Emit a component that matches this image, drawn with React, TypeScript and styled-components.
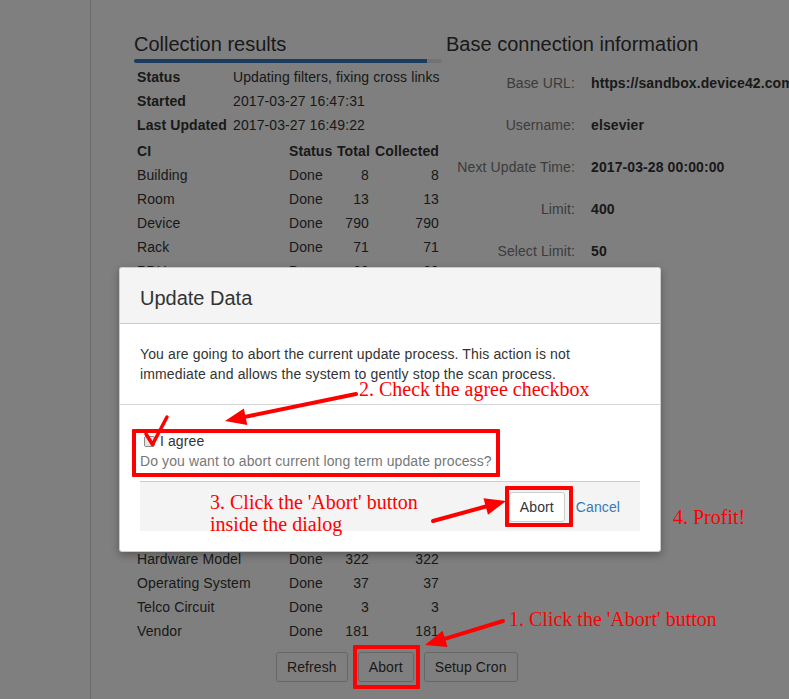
import React from "react";
import styled, { createGlobalStyle } from "styled-components";

const GlobalStyle = createGlobalStyle`
  html, body { margin: 0; padding: 0; overflow: hidden; background: #fff; }
  body {
    font-family: "Liberation Sans", Arial, sans-serif;
    font-size: 14px;
    line-height: 20px;
    color: #333;
    letter-spacing: 0.1px;
  }
  * { box-sizing: border-box; }
`;

const Page = styled.div`
  position: relative;
  width: 100vw;
  height: 100vh;
  overflow: hidden;
  display: flex;
  background: #fff;
`;

const Sidebar = styled.aside`
  flex: none;
  width: 91px;
  border-right: 1px solid #d6d6d6;
`;

const Main = styled.main`
  flex: 1;
  min-width: 0;
  display: flex;
  gap: 4px;
  padding: 33px 0 0 43px;
`;

const LeftCol = styled.section`
  flex: none;
  width: 308px;
`;

const RightCol = styled.section`
  flex: none;
  white-space: nowrap;
`;

const Heading = styled.h2<{ $gap: number }>`
  margin: 0 0 ${(p) => p.$gap}px;
  font-size: 20px;
  line-height: 22px;
  font-weight: 400;
  letter-spacing: 0;
  white-space: nowrap;
`;

const Progress = styled.div`
  height: 4px;
  border-radius: 2px;
  background: #e6e6e6;
  overflow: hidden;
  margin-bottom: 2px;
`;

const ProgressFill = styled.div`
  height: 100%;
  background: #3479bd;
`;

const InfoGrid = styled.div`
  display: grid;
  grid-template-columns: 96px 1fr;
  margin-bottom: 2px;
`;

const CIGrid = styled.div`
  display: grid;
  grid-template-columns: 152px 48px 38px 70px;
`;

const Cell = styled.div<{ $bold?: boolean; $right?: boolean }>`
  padding: 2px 3px;
  white-space: nowrap;
  font-weight: ${(p) => (p.$bold ? 700 : 400)};
  text-align: ${(p) => (p.$right ? "right" : "left")};
`;

const ButtonBar = styled.div`
  display: flex;
  gap: 10px;
  margin-top: 9px;
  padding-left: 142px;
  white-space: nowrap;
`;

const Button = styled.button`
  flex: none;
  height: 30px;
  padding: 0 10px;
  border: 1px solid #ccc;
  border-radius: 3px;
  background: #fff;
  color: #333;
  font-family: inherit;
  font-size: 14px;
  letter-spacing: 0.1px;
  line-height: 20px;
  white-space: nowrap;
`;

const FieldGrid = styled.div`
  display: grid;
  grid-template-columns: 129px auto;
  column-gap: 16px;
  grid-auto-rows: 42px;
  align-items: center;
`;

const FieldLabel = styled.div`
  text-align: right;
  color: #777;
`;

const FieldValue = styled.div`
  font-weight: 700;
`;

const Backdrop = styled.div`
  position: absolute;
  inset: 0;
  background: rgba(0, 0, 0, 0.5);
`;

const Dialog = styled.div`
  position: absolute;
  left: 119px;
  top: 267px;
  width: 542px;
  background: #fff;
  border: 1px solid rgba(0, 0, 0, 0.2);
  border-radius: 3px;
  box-shadow: 0 3px 9px rgba(0, 0, 0, 0.3);
  padding-bottom: 20px;
`;

const DialogHeader = styled.div`
  background: #f4f4f4;
  padding: 19px 20px 14px;
  border-bottom: 1px solid #ccc;
  border-radius: 3px 3px 0 0;
`;

const DialogTitle = styled.h4`
  margin: 0;
  font-size: 20px;
  line-height: 22px;
  font-weight: 400;
  letter-spacing: 0;
`;

const DialogBody = styled.div`
  padding: 20px 20px 20px;
  border-bottom: 1px solid #d6d6d6;
  letter-spacing: 0.14px;
  p { margin: 0; }
`;

const ConfirmBlock = styled.div`
  padding: 26px 20px 0;
`;

const CheckLabel = styled.label`
  display: flex;
  align-items: center;
  height: 20px;
`;

const Checkbox = styled.input`
  appearance: none;
  width: 11px;
  height: 11px;
  margin: 0 5px 0 4px;
  border: 1px solid #8c8c8c;
  border-radius: 2px;
  background: #e4e4e4;
`;

const Hint = styled.div`
  color: #777;
`;

const DialogFooter = styled.div`
  margin: 10px 20px 0;
  padding: 10px 20px 9px;
  background: #f4f4f4;
  border-top: 1px solid #ccc;
  display: flex;
  justify-content: flex-end;
  align-items: center;
  gap: 11px;
`;

const LinkButton = styled.a`
  color: #337ab7;
  text-decoration: none;
`;

const Annotations = styled.div`
  position: absolute;
  inset: 0;
  pointer-events: none;
`;

const Note = styled.div<{ $x: number; $y: number }>`
  position: absolute;
  left: ${(p) => p.$x}px;
  top: ${(p) => p.$y}px;
  font-family: "Liberation Serif", "Times New Roman", serif;
  font-size: 20px;
  line-height: 22px;
  letter-spacing: 0;
  color: #ff0000;
  white-space: nowrap;
`;

const Frame = styled.div<{ $x: number; $y: number; $w: number; $h: number }>`
  position: absolute;
  left: ${(p) => p.$x}px;
  top: ${(p) => p.$y}px;
  width: ${(p) => p.$w}px;
  height: ${(p) => p.$h}px;
  border: 4px solid #ff0000;
  border-radius: 1px;
`;

const Drawing = styled.svg`
  position: absolute;
  inset: 0;
  width: 100%;
  height: 100%;
`;

type Pt = [number, number];

function Arrow({ from, to }: { from: Pt; to: Pt }) {
  const dx = to[0] - from[0];
  const dy = to[1] - from[1];
  const len = Math.hypot(dx, dy);
  const ux = dx / len;
  const uy = dy / len;
  const L = 21;
  const W = 8.5;
  const bx = to[0] - ux * L;
  const by = to[1] - uy * L;
  const nx = -uy;
  const ny = ux;
  const pts = `${to[0]},${to[1]} ${bx + nx * W},${by + ny * W} ${bx - nx * W},${by - ny * W}`;
  return (
    <g>
      <line x1={from[0]} y1={from[1]} x2={bx + ux * 2} y2={by + uy * 2} stroke="#ff0000" strokeWidth={4} strokeLinecap="round" />
      <polygon points={pts} fill="#ff0000" />
    </g>
  );
}

const info = [
  ["Status", "Updating filters, fixing cross links"],
  ["Started", "2017-03-27 16:47:31"],
  ["Last Updated", "2017-03-27 16:49:22"],
];

const ciRows: [string, string, string, string][] = [
  ["Building", "Done", "8", "8"],
  ["Room", "Done", "13", "13"],
  ["Device", "Done", "790", "790"],
  ["Rack", "Done", "71", "71"],
  ["PDU", "Done", "29", "29"],
  ["Asset", "Done", "54", "54"],
  ["Customer", "Done", "12", "12"],
  ["Department", "Done", "9", "9"],
  ["IP Address", "Done", "640", "640"],
  ["Subnet", "Done", "48", "48"],
  ["VLAN", "Done", "22", "22"],
  ["Switch Port", "Done", "310", "310"],
  ["Part", "Done", "87", "87"],
  ["Part Model", "Done", "15", "15"],
  ["Service", "Done", "64", "64"],
  ["Application", "Done", "19", "19"],
  ["Hardware Model", "Done", "322", "322"],
  ["Operating System", "Done", "37", "37"],
  ["Telco Circuit", "Done", "3", "3"],
  ["Vendor", "Done", "181", "181"],
];

const fields = [
  ["Base URL:", "https://sandbox.device42.com"],
  ["Username:", "elsevier"],
  ["Next Update Time:", "2017-03-28 00:00:00"],
  ["Limit:", "400"],
  ["Select Limit:", "50"],
];

export default function App() {
  return (
    <>
      <GlobalStyle />
      <Page>
        <Sidebar />
        <Main>
          <LeftCol>
            <Heading $gap={4}>Collection results</Heading>
            <Progress>
              <ProgressFill style={{ width: "95.1%" }} />
            </Progress>
            <InfoGrid>
              {info.map(([k, v]) => (
                <React.Fragment key={k}>
                  <Cell $bold>{k}</Cell>
                  <Cell>{v}</Cell>
                </React.Fragment>
              ))}
            </InfoGrid>
            <CIGrid>
              <Cell $bold>CI</Cell>
              <Cell $bold>Status</Cell>
              <Cell $bold $right>Total</Cell>
              <Cell $bold $right>Collected</Cell>
              {ciRows.map(([name, st, total, col]) => (
                <React.Fragment key={name}>
                  <Cell>{name}</Cell>
                  <Cell>{st}</Cell>
                  <Cell $right>{total}</Cell>
                  <Cell $right>{col}</Cell>
                </React.Fragment>
              ))}
            </CIGrid>
            <ButtonBar>
              <Button>Refresh</Button>
              <Button>Abort</Button>
              <Button>Setup Cron</Button>
            </ButtonBar>
          </LeftCol>
          <RightCol>
            <Heading $gap={7}>Base connection information</Heading>
            <FieldGrid>
              {fields.map(([k, v]) => (
                <React.Fragment key={k}>
                  <FieldLabel>{k}</FieldLabel>
                  <FieldValue>{v}</FieldValue>
                </React.Fragment>
              ))}
            </FieldGrid>
          </RightCol>
        </Main>

        <Backdrop />

        <Dialog>
          <DialogHeader>
            <DialogTitle>Update Data</DialogTitle>
          </DialogHeader>
          <DialogBody>
            <p>
              You are going to abort the current update process. This action is not
              <br />
              immediate and allows the system to gently stop the scan process.
            </p>
          </DialogBody>
          <ConfirmBlock>
            <CheckLabel>
              <Checkbox type="checkbox" />
              I agree
            </CheckLabel>
            <Hint>Do you want to abort current long term update process?</Hint>
          </ConfirmBlock>
          <DialogFooter>
            <Button>Abort</Button>
            <LinkButton href="#">Cancel</LinkButton>
          </DialogFooter>
        </Dialog>

        <Annotations>
          <Frame $x={132} $y={429} $w={368} $h={48} />
          <Frame $x={505} $y={486} $w={68} $h={41} />
          <Frame $x={353} $y={645} $w={67} $h={44} />
          <Drawing viewBox="0 0 789 699" preserveAspectRatio="xMinYMin meet">
            <Arrow from={[356, 394]} to={[225, 421]} />
            <Arrow from={[433, 521]} to={[506, 501]} />
            <Arrow from={[503, 621]} to={[425, 645]} />
            <polyline
              points="146,434 152.5,444.5 167,417"
              fill="none"
              stroke="#ff0000"
              strokeWidth={3.5}
              strokeLinecap="round"
              strokeLinejoin="round"
            />
          </Drawing>
          <Note $x={359} $y={378}>2. Check the agree checkbox</Note>
          <Note $x={210} $y={491}>
            3. Click the 'Abort' button
            <br />
            inside the dialog
          </Note>
          <Note $x={673} $y={506}>4. Profit!</Note>
          <Note $x={509} $y={608}>1. Click the 'Abort' button</Note>
        </Annotations>
      </Page>
    </>
  );
}
